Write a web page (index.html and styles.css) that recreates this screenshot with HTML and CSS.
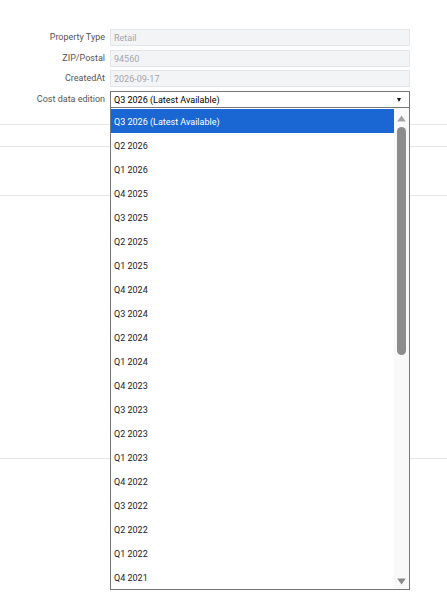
FILE: index.html
```html
<!DOCTYPE html>
<html>
<head>
<meta charset="utf-8">
<link rel="stylesheet" href="styles.css">
</head>
<body>
<div class="page">
  <div class="form">
    <div class="row">
      <span class="label">Property Type</span>
      <span class="field">Retail</span>
    </div>
    <div class="row">
      <span class="label">ZIP/Postal</span>
      <span class="field">94560</span>
    </div>
    <div class="row">
      <span class="label">CreatedAt</span>
      <span class="field">2026-09-17</span>
    </div>
    <div class="row">
      <span class="label">Cost data edition</span>
      <span class="select">Q3 2026 (Latest Available)<span class="caret"></span></span>
    </div>
  </div>
  <div class="section s1"></div>
  <div class="section s2"></div>
  <div class="section s3"></div>
  <div class="section s4"></div>

  <div class="dropdown">
    <ul class="options">
      <li class="selected">Q3 2026 (Latest Available)</li>
      <li>Q2 2026</li>
      <li>Q1 2026</li>
      <li>Q4 2025</li>
      <li>Q3 2025</li>
      <li>Q2 2025</li>
      <li>Q1 2025</li>
      <li>Q4 2024</li>
      <li>Q3 2024</li>
      <li>Q2 2024</li>
      <li>Q1 2024</li>
      <li>Q4 2023</li>
      <li>Q3 2023</li>
      <li>Q2 2023</li>
      <li>Q1 2023</li>
      <li>Q4 2022</li>
      <li>Q3 2022</li>
      <li>Q2 2022</li>
      <li>Q1 2022</li>
      <li>Q4 2021</li>
    </ul>
    <div class="scrollbar">
      <svg class="arrow up" width="9" height="7" viewBox="0 0 9 7"><path d="M4.5 0.5 L8.8 6.5 L0.2 6.5 Z" fill="#a3a3a3"/></svg>
      <div class="thumb"></div>
      <div class="track-rest"></div>
      <svg class="arrow down" width="9" height="7" viewBox="0 0 9 7"><path d="M0.2 0.5 L8.8 0.5 L4.5 6.5 Z" fill="#8a8a8a"/></svg>
    </div>
  </div>
</div>
</body>
</html>
```

FILE: styles.css
```css
* { box-sizing: border-box; }
html, body { margin: 0; padding: 0; background: #fff; }
body {
  font-family: Roboto, "Liberation Sans", Arial, sans-serif;
  font-size: 9px;
  color: #222;
}
.page {
  position: relative;
  width: 447px;
  height: 592px;
  overflow: hidden;
}
.form {
  padding-top: 29px;
  display: flex;
  flex-direction: column;
  gap: 3.67px;
}
.row {
  display: grid;
  grid-template-columns: 105px 300px;
  column-gap: 5px;
  height: 17px;
}
.label {
  text-align: right;
  line-height: 16px;
  color: #555;
  white-space: nowrap;
}
.field {
  display: block;
  height: 17px;
  line-height: 16px;
  padding-left: 3px;
  background: #f3f4f6;
  border: 1px solid #e3e5e8;
  color: #a4a7ad;
}
.select {
  position: relative;
  display: block;
  height: 17px;
  line-height: 16px;
  padding-left: 3px;
  background: #fff;
  border: 1px solid #767676;
  color: #000;
}
.caret {
  position: absolute;
  right: 8px;
  top: 6px;
  width: 0;
  height: 0;
  border-left: 2.5px solid transparent;
  border-right: 2.5px solid transparent;
  border-top: 4px solid #111;
}
.section { border-bottom: 1px solid #e6e6e6; }
.s1 { height: 17px; }
.s2 { height: 22px; }
.s3 { height: 49px; }
.s4 { height: 263px; }

.dropdown {
  position: absolute;
  left: 110px;
  top: 107px;
  width: 300px;
  height: 483px;
  border: 1px solid #767676;
  padding-top: 1px;
  background: #fff;
  display: flex;
  overflow: hidden;
}
.options {
  list-style: none;
  margin: 0;
  padding: 0;
  flex: 1;
}
.options li {
  height: 24px;
  line-height: 26px;
  padding-left: 3px;
  color: #222;
  white-space: nowrap;
}
.options li.selected {
  background: #1a67d3;
  color: #fff;
}
.scrollbar {
  width: 15px;
  margin-top: -1px;
  background: #f9f9f9;
  display: flex;
  flex-direction: column;
  align-items: center;
}
.arrow { display: block; flex: none; }
.arrow.up { margin-top: 7px; }
.thumb {
  width: 9px;
  height: 228px;
  margin-top: 5px;
  border-radius: 4.5px;
  background: #8c8c8c;
}
.track-rest { flex: 1; }
.arrow.down { margin-bottom: 4px; }
```
